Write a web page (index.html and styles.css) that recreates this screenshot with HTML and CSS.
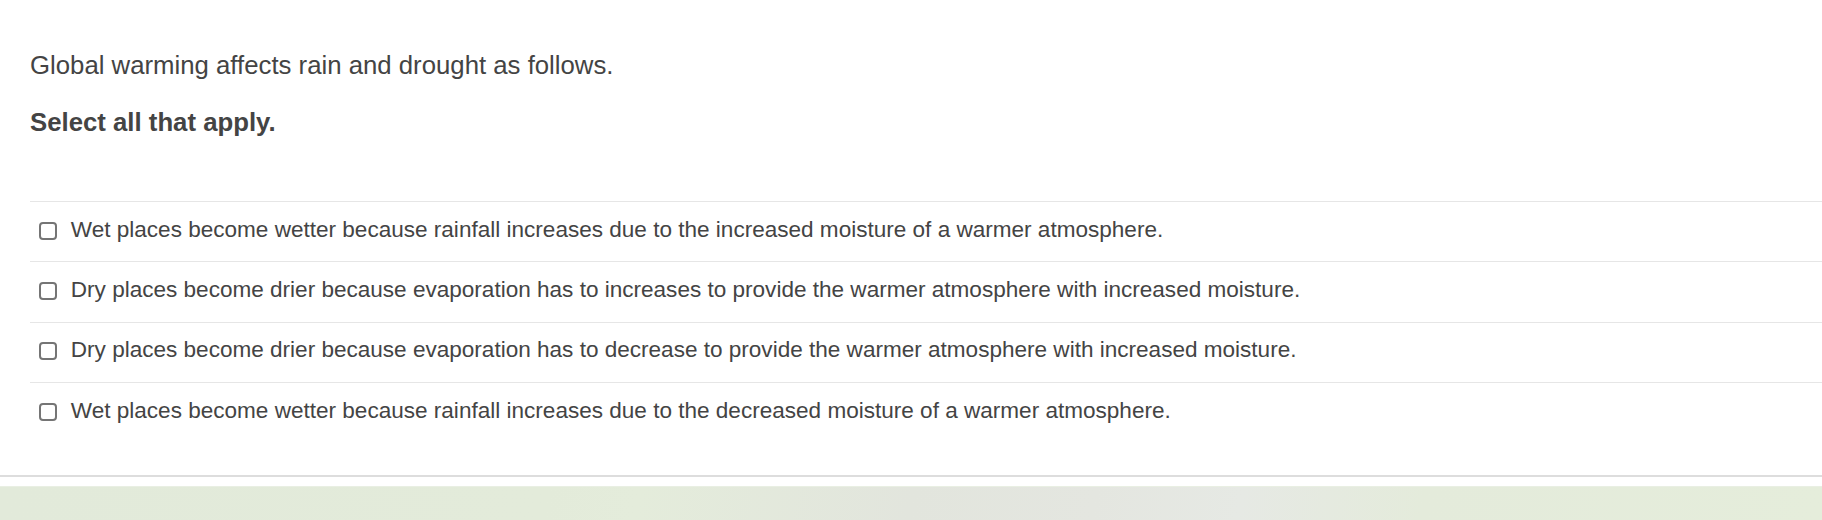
FILE: index.html
```html
<!DOCTYPE html>
<html lang="en">
<head>
<meta charset="utf-8">
<title>Question</title>
<link rel="stylesheet" href="styles.css">
</head>
<body>
<main class="question">
  <div class="prompt">
    <p class="stem">Global warming affects rain and drought as follows.</p>
    <p class="instr">Select all that apply.</p>
  </div>
  <ul class="choices">
    <li class="choice"><label class="choice-label"><input class="box" type="checkbox"><span class="choice-text">Wet places become wetter because rainfall increases due to the increased moisture of a warmer atmosphere.</span></label></li>
    <li class="choice"><label class="choice-label"><input class="box" type="checkbox"><span class="choice-text">Dry places become drier because evaporation has to increases to provide the warmer atmosphere with increased moisture.</span></label></li>
    <li class="choice"><label class="choice-label"><input class="box" type="checkbox"><span class="choice-text">Dry places become drier because evaporation has to decrease to provide the warmer atmosphere with increased moisture.</span></label></li>
    <li class="choice"><label class="choice-label"><input class="box" type="checkbox"><span class="choice-text">Wet places become wetter because rainfall increases due to the decreased moisture of a warmer atmosphere.</span></label></li>
  </ul>
</main>
<footer class="band"></footer>
</body>
</html>
```

FILE: styles.css
```css
html, body {
  margin: 0;
  padding: 0;
  background: #ffffff;
}

body {
  font-family: "Liberation Sans", Arial, sans-serif;
  color: #444444;
  overflow: hidden;
}

.question {
  padding: 51px 0 32.4px 30px;
  border-bottom: 2px solid #dddddd;
}

.prompt {
  display: flex;
  flex-direction: column;
  gap: 29px;
  font-size: 25.75px;
}

.stem,
.instr {
  margin: 0;
  line-height: 28px;
}

.instr {
  font-weight: bold;
}

.choices {
  list-style: none;
  margin: 65px 0 0 0;
  padding: 0;
  font-size: 22.55px;
}

.choice {
  border-top: 1px solid #e6e6e6;
  padding: 13.5px 0 17.9px 8px;
  line-height: 28px;
}

.choice-label {
  display: flex;
  align-items: center;
}

.box {
  appearance: none;
  -webkit-appearance: none;
  margin: 0 14.3px 0 0.5px;
  width: 18px;
  height: 18px;
  border: 2px solid #757575;
  border-radius: 4px;
  background: #ffffff;
  flex: none;
  position: relative;
  top: 1px;
}

.band {
  margin-top: 9px;
  height: 34px;
  border-top: 1px solid #e9efe3;
  background: linear-gradient(100deg, #e2eada 0%, #e3ebda 30%, #e4ecdb 35%, #e2e5dd 50%, #e4e6e0 60%, #e6e9e4 68%, #e4ebdb 78%, #e5eddb 100%);
}
```
